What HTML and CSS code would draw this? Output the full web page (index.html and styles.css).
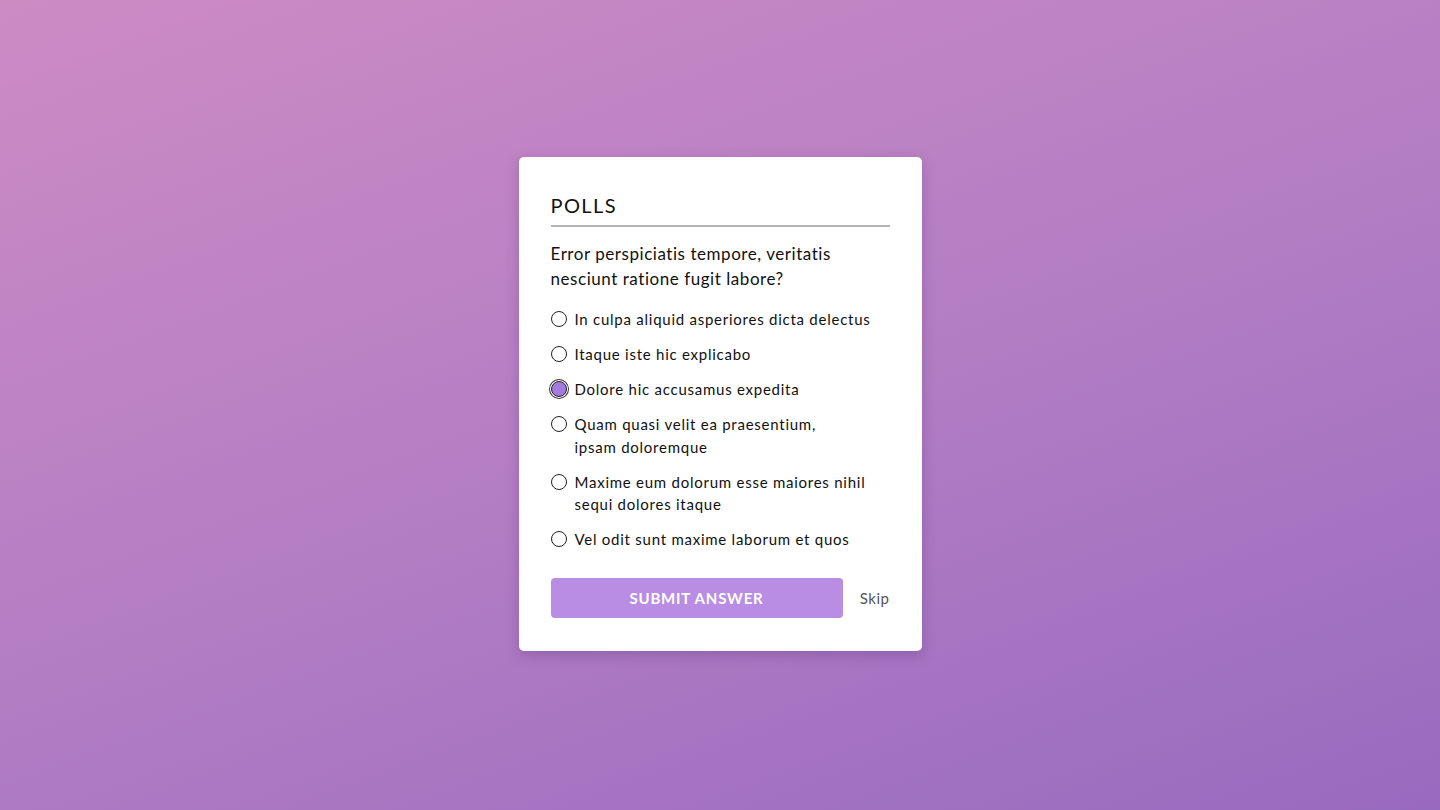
FILE: index.html
```html
<!DOCTYPE html>
<html lang="en">
<head>
<meta charset="utf-8">
<title>Polls</title>
<link rel="stylesheet" href="styles.css">
</head>
<body>
<main class="stage">
  <section class="card">
    <h2 class="title">POLLS</h2>
    <p class="question">Error perspiciatis tempore, veritatis<br>nesciunt ratione fugit labore?</p>
    <ul class="options">
      <li class="option"><span class="radio"></span><span class="label">In culpa aliquid asperiores dicta delectus</span></li>
      <li class="option"><span class="radio"></span><span class="label">Itaque iste hic explicabo</span></li>
      <li class="option"><span class="radio checked"></span><span class="label">Dolore hic accusamus expedita</span></li>
      <li class="option"><span class="radio"></span><span class="label">Quam quasi velit ea praesentium,<br>ipsam doloremque</span></li>
      <li class="option"><span class="radio"></span><span class="label">Maxime eum dolorum esse maiores nihil<br>sequi dolores itaque</span></li>
      <li class="option"><span class="radio"></span><span class="label">Vel odit sunt maxime laborum et quos</span></li>
    </ul>
    <div class="actions">
      <button class="submit">SUBMIT ANSWER</button>
      <a class="skip">Skip</a>
    </div>
  </section>
</main>
</body>
</html>
```
FILE: styles.css
```css
html, body {
  margin: 0;
  padding: 0;
  height: 100%;
}
body {
  font-family: Lato, "Open Sans", sans-serif;
  background: linear-gradient(160deg, #cd8bc4 0%, #b47ec4 50%, #986abf 100%);
  color: #111;
}
.stage {
  height: 808px;
  display: flex;
  align-items: center;
  justify-content: center;
}
.card {
  width: 339px;
  background: #fff;
  border-radius: 5px;
  padding: 32px 32px 33px 32px;
  box-shadow: 0 4px 14px rgba(80, 40, 110, 0.28);
}
.title {
  margin: 0;
  font-size: 20px;
  font-weight: 400;
  letter-spacing: 1.4px;
  line-height: 32px;
  padding-bottom: 4px;
  border-bottom: 2px solid #b3b3b3;
  color: #111;
}
.question {
  margin: 14px 0 17px 0;
  font-size: 17px;
  line-height: 25px;
  letter-spacing: 0.55px;
}
.options {
  list-style: none;
  margin: 0;
  padding: 0;
  display: flex;
  flex-direction: column;
  gap: 12.5px;
}
.option {
  display: flex;
  align-items: flex-start;
  gap: 8px;
  font-size: 15px;
  line-height: 22.5px;
  letter-spacing: 0.75px;
}
.radio {
  flex: none;
  width: 14px;
  height: 14px;
  border: 1px solid #222;
  border-radius: 50%;
  margin-top: 3px;
  background: #fff;
}
.radio.checked {
  background: #a57ade;
  box-shadow: 0 0 0 1px #fff, 0 0 0 2px #333;
}
.actions {
  display: flex;
  align-items: center;
  justify-content: space-between;
  margin-top: 27.5px;
}
.submit {
  width: 292px;
  height: 40px;
  border: none;
  border-radius: 4px;
  background: #b98de3;
  color: #fff;
  font-family: Lato, "Open Sans", sans-serif;
  font-size: 15px;
  font-weight: 700;
  letter-spacing: 0.8px;
  padding: 0;
}
.skip {
  font-size: 15px;
  color: #555;
  letter-spacing: 0.5px;
}
```
